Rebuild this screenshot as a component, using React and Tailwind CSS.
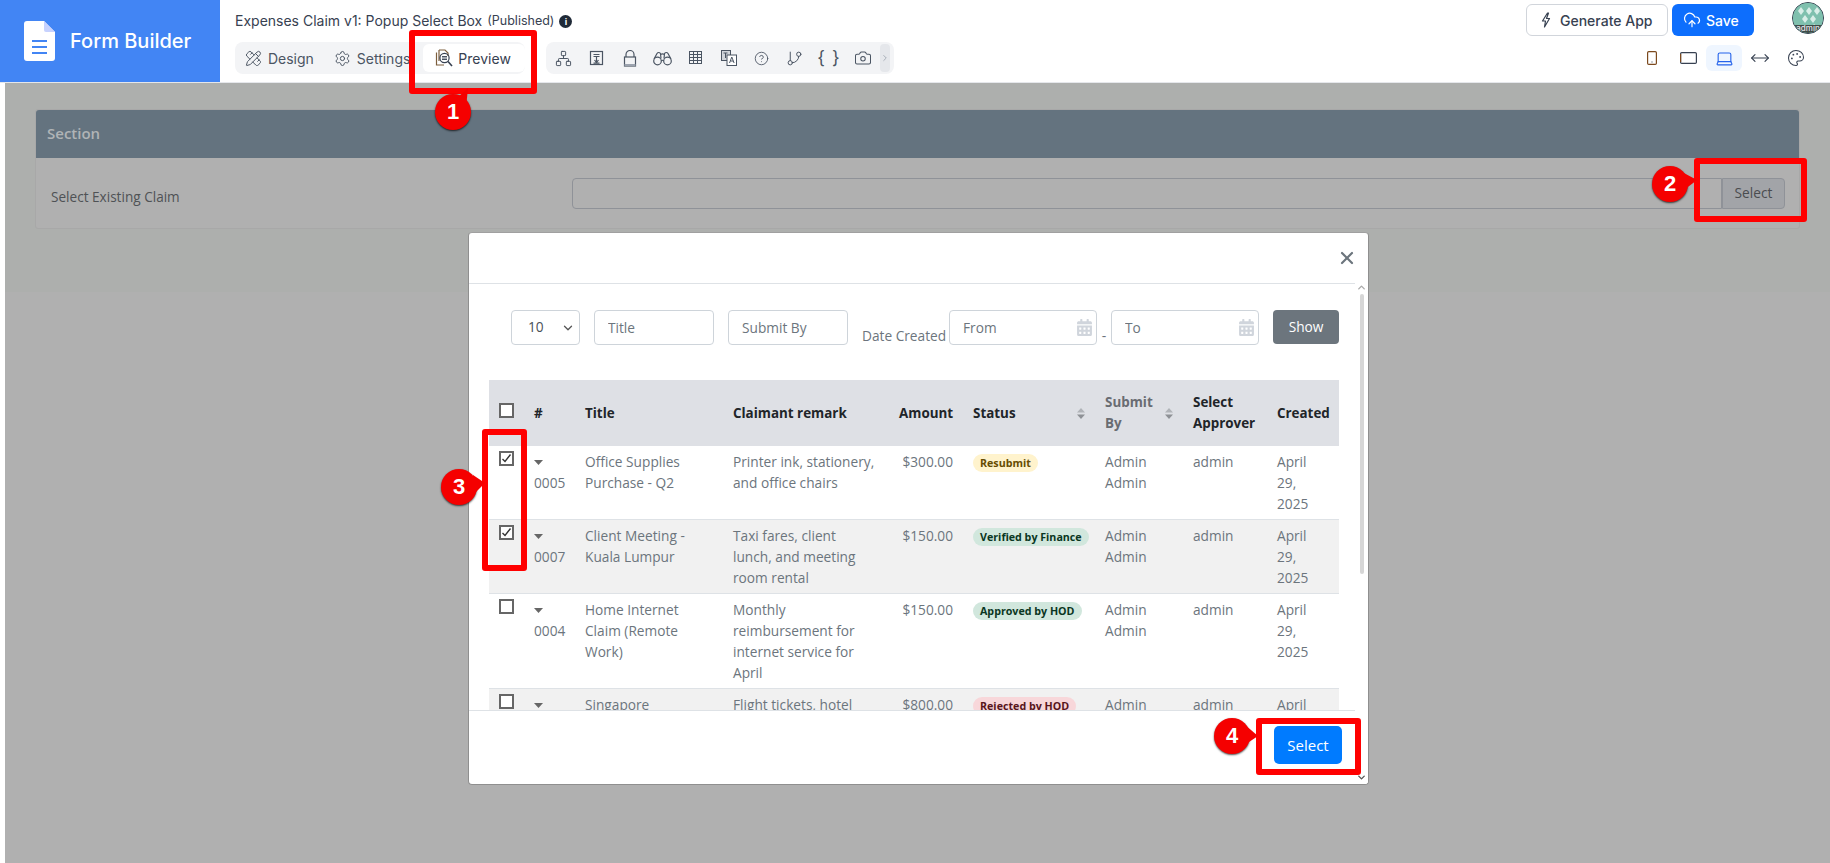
import React from "react";
import { PencilRuler, Settings, Network, CircleHelp, GitBranch, Camera, ChevronRight, ChevronDown, ChevronUp, CloudUpload, Laptop, MoveHorizontal, Palette, X } from "lucide-react";
import { FaCalendarAlt } from "react-icons/fa";

const FONT_UI = "font-['Inter',sans-serif]";

function Annot({ cls }) {
  return <div className={`absolute border-[6px] border-[#ff0000] rounded-[3px] z-30 pointer-events-none ${cls}`} />;
}

function Badge({ n, cls, tip }) {
  return (
    <div className={`absolute z-40 w-9 h-9 rounded-full bg-[#f50000] shadow-[0_1px_2px_rgba(0,0,0,0.7)] flex items-center justify-center ${cls}`}>
      <svg className="absolute left-0 top-0 overflow-visible" width="36" height="36" viewBox="0 0 36 36">
        <path d={tip} fill="#f50000" />
      </svg>
      <span className="relative font-['Liberation_Sans',sans-serif] font-bold text-[22px] leading-none text-white">{n}</span>
    </div>
  );
}

function PreviewIcon() {
  return (
    <svg width="18" height="18" viewBox="0 0 18 18" fill="none" stroke="#374151" strokeWidth="1.2">
      <path d="M4 1h6l3 3v3M4 1v11" stroke="#7c5e3c" />
      <path d="M1.5 3.5V16H9" stroke="#7c5e3c" />
      <circle cx="9.5" cy="9" r="4.6" />
      <path d="M13 12.5l4 4.5" strokeWidth="1.6" />
      <path d="M7 7.5h5M7 9h5M7 10.5h5" strokeWidth="0.9" />
    </svg>
  );
}

function ToolIcons() {
  const s = { width: 17, height: 17, strokeWidth: 1.4 };
  const wrap = "w-[33px] flex items-center justify-center shrink-0 text-[#4b5563]";
  return (
    <div className="ml-[1px] h-[32px] w-[348px] bg-[#f3f4f6] rounded-lg flex items-center pl-[1px] overflow-hidden">
      <div className={wrap}><Network {...s} /></div>
      <div className={wrap}>
        <svg width="16" height="16" viewBox="0 0 16 16" fill="none" stroke="#4b5563" strokeWidth="1.2">
          <rect x="1.5" y="1.5" width="12" height="13" />
          <path d="M4.5 4.5h6M4.5 6.5h6M7.5 6v6M5.5 10l2 2.5 2-2.5M4.5 13.2h6" />
        </svg>
      </div>
      <div className={wrap}>
        <svg width="14" height="17" viewBox="0 0 14 17" fill="none" stroke="#4b5563" strokeWidth="1.2">
          <path d="M3 7V4.5a4 4 0 0 1 8 0V7" />
          <rect x="1.5" y="7" width="11" height="9" />
          <path d="M1.5 15h11" stroke="#9ca3af" strokeWidth="2" />
        </svg>
      </div>
      <div className={wrap}>
        <svg width="19" height="15" viewBox="0 0 19 15" fill="none" stroke="#4b5563" strokeWidth="1.2">
          <circle cx="4.5" cy="10" r="3.8" />
          <circle cx="14.5" cy="10" r="3.8" />
          <path d="M8.3 10c.8-1 1.6-1 2.4 0M1 8l3-5.5c1-1.5 3-1.2 3.5.3L8 7.5M18 8l-3-5.5c-1-1.5-3-1.2-3.5.3L11 7.5M7.5 3.5c1-.6 3-.6 4 0" />
        </svg>
      </div>
      <div className={wrap}>
        <svg width="14" height="14" viewBox="0 0 14 14" fill="none" stroke="#4b5563" strokeWidth="1">
          <rect x="0.5" y="0.5" width="12" height="12" />
          <path d="M0.5 3.5h12M0.5 6.5h12M0.5 9.5h12M4.5 0.5v12M8.5 0.5v12" />
        </svg>
      </div>
      <div className={wrap}>
        <svg width="16" height="16" viewBox="0 0 16 16" fill="none" stroke="#4b5563" strokeWidth="1">
          <rect x="0.5" y="0.5" width="9" height="10" fill="#d1d5db" />
          <rect x="6" y="5" width="9.5" height="10.5" fill="#fff" />
          <path d="M8.5 13l2.3-6 2.3 6M9.5 11h2.6" />
          <path d="M2.5 3h4M4.5 3v5" />
        </svg>
      </div>
      <div className={wrap}><CircleHelp size={15} strokeWidth={1.4} /></div>
      <div className={wrap}><GitBranch {...s} /></div>
      <div className={`${wrap} ${FONT_UI} text-[18px] leading-none pl-[3px] tracking-[1px]`}>{"{ }"}</div>
      <div className={`${wrap} ml-[2px]`}><Camera width={18} height={18} strokeWidth={1.4} /></div>
      <div className="ml-[1px] w-[10px] h-[28px] bg-[#e5e7eb] rounded-sm flex items-center justify-center text-[#9ca3af]"><ChevronRight size={10} /></div>
    </div>
  );
}

function Header() {
  return (
    <header className={`h-[83px] bg-white border-b border-[#e5e7eb] flex shrink-0 ${FONT_UI}`}>
      <div className="w-[220px] bg-[#4285f4] flex items-center pl-[24px] shrink-0">
        <svg width="31" height="40" viewBox="0 0 31 40">
          <path d="M3 0h17l11 11v26a3 3 0 0 1-3 3H3a3 3 0 0 1-3-3V3a3 3 0 0 1 3-3z" fill="#fff" />
          <path d="M20 0l11 11H22a2 2 0 0 1-2-2z" fill="#c7d2fe" />
          <path d="M8 20h15M8 26h15M8 32h15" stroke="#4285f4" strokeWidth="2.2" />
        </svg>
        <span className="ml-[15px] text-white text-[20px] font-medium leading-none">Form Builder</span>
      </div>
      <div className="flex-1 pl-[15px] pt-[12px]">
        <div className="flex items-center h-[18px] text-[#374151] text-[14px] leading-none">
          <span>Expenses Claim v1: Popup Select Box</span>
          <span className="ml-[5px] text-[12.5px]">(Published)</span>
          <span className="ml-[5px] w-[13px] h-[13px] rounded-full bg-[#1f2937] text-white flex items-center justify-center text-[9px] font-bold">i</span>
        </div>
        <div className="flex mt-[12px] gap-[20px]">
          <div className="h-[32px] w-[290px] bg-[#f3f4f6] rounded-lg flex items-center pl-[10px] text-[14px] text-[#4b5563]">
            <PencilRuler size={17} strokeWidth={1.4} />
            <span className="ml-[6px]">Design</span>
            <Settings size={17} strokeWidth={1.4} className="ml-[20px]" />
            <span className="ml-[6px]">Settings</span>
            <div className="ml-[13px] h-[28px] w-[102px] bg-white rounded-md flex items-center pl-[12px] text-[#374151]">
              <PreviewIcon />
              <span className="ml-[5px]">Preview</span>
            </div>
          </div>
          <ToolIcons />
        </div>
      </div>
      <div className="w-[304px] shrink-0 relative text-[14px] pt-[4px]">
        <div className="flex">
          <button className="h-[32px] w-[142px] border border-[#d1d5db] rounded-md bg-white text-[#374151] font-medium flex items-center pl-[14px]">
            <svg width="10" height="16" viewBox="0 0 10 16" fill="none" stroke="#374151" strokeWidth="1.2" strokeLinejoin="round">
              <path d="M6.5 1L1.5 9h3L3.5 15l5-8.5h-3L7.5 1z" />
            </svg>
            <span className="ml-[9px]">Generate App</span>
          </button>
          <button className="ml-[4px] h-[32px] w-[82px] bg-[#0d6efd] rounded-md text-white font-medium flex items-center pl-[11px]">
            <CloudUpload size={18} strokeWidth={1.6} />
            <span className="ml-[5px]">Save</span>
          </button>
          <div className="ml-[38px] w-[32px] h-[32px] -mt-[2px] rounded-full overflow-hidden shrink-0 border border-[#374151] relative bg-[#7fbfae]">
            <svg width="32" height="32" viewBox="0 0 32 32" className="absolute inset-0">
              <rect width="32" height="32" fill="#7fc0ae" />
              <path d="M8 4l3 4-3 4-3-4zM16 4l3 4-3 4-3-4zM24 4l3 4-3 4-3-4zM12 12l3 4-3 4-3-4zM20 12l3 4-3 4-3-4z" fill="#d9eee8" />
              <rect y="22" width="32" height="10" fill="#3f4a47" />
            </svg>
            <span className="absolute left-0 right-0 top-[21px] text-center text-[8px] leading-[9px] font-medium text-[#e5e7eb]">admin</span>
          </div>
        </div>
        <div className="absolute top-[45px] left-0 w-full h-[26px]">
          <svg className="absolute left-[121px] top-[6px]" width="10" height="14" viewBox="0 0 10 14" fill="none" stroke="#374151" strokeWidth="1.2">
            <rect x="0.6" y="0.6" width="8.8" height="12.8" rx="1.2" stroke="#7c4a1e" />
            <path d="M4.5 11h1" />
          </svg>
          <svg className="absolute left-[154px] top-[7px]" width="17" height="12" viewBox="0 0 17 12" fill="none" stroke="#374151" strokeWidth="1.2">
            <rect x="0.6" y="0.6" width="15.8" height="10.8" rx="1.2" />
            <path d="M0.6 2v8" stroke="#7c4a1e" />
          </svg>
          <div className="absolute left-[180px] top-0 w-[36px] h-[26px] bg-[#eff6ff] rounded-md flex items-center justify-center text-[#2563eb]"><Laptop size={19} strokeWidth={1.4} /></div>
          <div className="absolute left-[224px] top-[3px] text-[#374151]"><MoveHorizontal size={20} strokeWidth={1.3} /></div>
          <div className="absolute left-[261px] top-[4px] text-[#374151]"><Palette size={18} strokeWidth={1.4} /></div>
        </div>
      </div>
    </header>
  );
}

function Check({ on }) {
  return (
    <span className="inline-flex w-[15px] h-[15px] border-2 border-[#666] bg-white items-center justify-center align-top">
      {on && (
        <svg width="11" height="11" viewBox="0 0 11 11" fill="none" stroke="#333" strokeWidth="1.4">
          <path d="M1.5 6l2.5 2.5 5.5-7" />
        </svg>
      )}
    </span>
  );
}

function Sort() {
  return (
    <svg width="8" height="11" viewBox="0 0 8 11" className="shrink-0">
      <path d="M0 4.5L4 0l4 4.5z" fill="#b0b3b8" />
      <path d="M0 6.5L4 11l4-4.5z" fill="#8e9196" />
    </svg>
  );
}

const tones = {
  yellow: "bg-[#fff3cd] text-[#664d03]",
  green: "bg-[#d1e7dd] text-[#0a3622]",
  red: "bg-[#f8d7da] text-[#58151c]",
};

const rows = [
  { id: "0005", on: true, title: "Office Supplies Purchase - Q2", remark: ["Printer ink, stationery,", "and office chairs"], amt: "$300.00", st: "Resubmit", tone: "yellow", by: "Admin Admin", date: "April 29, 2025" },
  { id: "0007", on: true, title: "Client Meeting - Kuala Lumpur", remark: ["Taxi fares, client", "lunch, and meeting", "room rental"], amt: "$150.00", st: "Verified by Finance", tone: "green", by: "Admin Admin", date: "April 29, 2025" },
  { id: "0004", on: false, title: "Home Internet Claim (Remote Work)", remark: ["Monthly", "reimbursement for", "internet service for", "April"], amt: "$150.00", st: "Approved by HOD", tone: "green", by: "Admin Admin", date: "April 29, 2025" },
  { id: "", on: false, title: "Singapore", remark: ["Flight tickets, hotel"], amt: "$800.00", st: "Rejected by HOD", tone: "red", by: "Admin", date: "April" },
];

function Table() {
  const th = "px-[10px] py-[5px] text-left font-bold align-middle text-[13.4px]";
  const td = "px-[10px] py-[5px] align-top";
  return (
    <table className="ml-[20px] mt-[35px] w-[850px] table-fixed border-collapse text-[13.7px] leading-[21px] text-[#6c757d]">
      <colgroup>
        <col className="w-[35px]" />
        <col className="w-[51px]" />
        <col className="w-[148px]" />
        <col className="w-[166px]" />
        <col className="w-[74px]" />
        <col className="w-[132px]" />
        <col className="w-[88px]" />
        <col className="w-[84px]" />
        <col className="w-[72px]" />
      </colgroup>
      <thead>
        <tr className="h-[66px] bg-[#dee0e5] text-[#212529]">
          <th className={th}><Check /></th>
          <th className={th}>#</th>
          <th className={th}>Title</th>
          <th className={th}>Claimant remark</th>
          <th className={`${th} !text-right`}>Amount</th>
          <th className={th}><div className="flex items-center justify-between"><span>Status</span><Sort /></div></th>
          <th className={`${th} text-[#696c72]`}><div className="flex items-center justify-between"><span>Submit<br />By</span><Sort /></div></th>
          <th className={th}>Select Approver</th>
          <th className={th}>Created</th>
        </tr>
      </thead>
      <tbody>
        {rows.map((r, i) => (
          <tr key={r.st + i} className={`border-b border-[#dee2e6] ${i % 2 ? "bg-[#f1f1f1]" : "bg-white"}`}>
            <td className={td}><Check on={r.on} /></td>
            <td className={td}>
              <div className="h-[21px] pt-[9px]">
                <svg width="9" height="5" viewBox="0 0 9 5" className="block"><path d="M0 0h9L4.5 5z" fill="#666" /></svg>
              </div>
              {r.id}
            </td>
            <td className={td}>{r.title}</td>
            <td className={td}>{r.remark.map((l) => <div key={l} className="whitespace-nowrap">{l}</div>)}</td>
            <td className={`${td} text-right`}>{r.amt}</td>
            <td className={td}>
              <span className={`inline-block rounded-full px-[7px] h-[18px] mt-[3px] align-top text-[10.7px] leading-[18px] font-bold whitespace-nowrap ${tones[r.tone]}`}>{r.st}</span>
            </td>
            <td className={td}>{r.by}</td>
            <td className={td}>admin</td>
            <td className={td}>{r.date}</td>
          </tr>
        ))}
      </tbody>
    </table>
  );
}

function Modal() {
  const input = "h-[35px] border border-[#ced4da] rounded-[4px] bg-white text-[13.7px] text-[#495057] placeholder:text-[#6c757d] pl-[13px] outline-none";
  return (
    <div className="absolute left-[468px] top-[232px] w-[901px] h-[553px] bg-white rounded-[4px] border border-[#8f8f8f] border-t-[#a0a0a0] flex flex-col overflow-hidden z-10">
      <div className="w-[890px] h-[51px] border-b border-[#dee2e6] flex items-center justify-end pr-[2px] shrink-0">
        <X size={20} strokeWidth={2.6} className="text-[#6c757d]" />
      </div>
      <div className="w-[890px] flex-1 overflow-hidden">
        <div className="pt-[26px]">
          <div className="flex items-start h-[35px] pl-[42px]">
            <div className="w-[69px] h-[35px] border border-[#ced4da] rounded-[4px] pl-[16px] flex items-center justify-between pr-[4px] text-[13.7px] text-[#495057]">
              <span>10</span><ChevronDown size={14} strokeWidth={2.2} className="text-[#555]" />
            </div>
            <input className={`${input} ml-[14px] w-[120px]`} placeholder="Title" />
            <input className={`${input} ml-[14px] w-[120px]`} placeholder="Submit By" />
            <span className="ml-[14px] mt-[15px] text-[13.7px] leading-[21px] text-[#6c757d] w-[87px] whitespace-nowrap">Date Created</span>
            <div className="relative">
              <input className={`${input} w-[148px]`} placeholder="From" />
              <FaCalendarAlt className="absolute right-[5px] top-[9px] w-[15px] h-[17px] text-[#d0d5dc]" />
            </div>
            <span className="w-[14px] text-center mt-[15px] text-[14px] leading-[21px] text-[#6c757d]">-</span>
            <div className="relative">
              <input className={`${input} w-[148px]`} placeholder="To" />
              <FaCalendarAlt className="absolute right-[5px] top-[9px] w-[15px] h-[17px] text-[#d0d5dc]" />
            </div>
            <button className="ml-[14px] w-[66px] h-[34px] rounded-[4px] bg-[#6c757d] text-white text-[13.7px]">Show</button>
          </div>
          <Table />
        </div>
      </div>
      <div className="w-[890px] h-[74px] border-t border-[#dee2e6] flex justify-end items-start pt-[15px] pr-[17px] shrink-0">
        <button className="w-[68px] h-[38px] rounded-[5px] bg-[#007bff] text-white text-[15px]">Select</button>
      </div>
      <div className="absolute right-0 top-[49px] bottom-0 w-[13px] bg-white flex flex-col items-center text-[#666]">
        <ChevronUp size={11} strokeWidth={3} className="text-[#aaa]" />
        <div className="mt-[1px] w-[4px] h-[280px] bg-[#d6d6d6] rounded-full" />
        <ChevronDown size={11} strokeWidth={3} className="mt-auto mb-[1px] text-[#555]" />
      </div>
    </div>
  );
}

export default function App() {
  return (
    <div className="relative w-[1830px] h-[863px] overflow-hidden bg-white font-['Open_Sans',sans-serif]">
      <Header />
      <main className="ml-[5px] h-[780px] bg-[#b0b0b0] flex flex-col">
        <div className="h-[209px] bg-[#adafad] pt-[26px] pl-[30px] shrink-0">
          <section className="w-[1765px] h-[120px] bg-[#b0b0b0] border border-[#a8a8a8] rounded-[3px]">
            <div className="h-[48px] bg-[#64737f] flex items-center pl-[11px] pb-[2px] text-[15px] font-semibold text-[#b0b4b6] rounded-t-[3px]">Section</div>
            <div className="h-[70px] flex items-center pl-[15px]">
              <span className="w-[521px] pt-[9px] text-[13.6px] text-[#4f5255]">Select Existing Claim</span>
              <div className="w-[1150px] h-[31px] border border-[#8f9298] rounded-l-[4px] bg-[#b0b0b0]" />
              <div className="w-[63px] h-[31px] border border-[#8f9298] rounded-r-[4px] bg-[#a2a4a8] flex items-center justify-center text-[13.7px] text-[#4a4c4f]">Select</div>
            </div>
          </section>
        </div>
      </main>
      <Modal />

      <Annot cls="left-[409px] top-[30px] w-[128px] h-[64px]" />
      <Badge n="1" cls="left-[435px] top-[94px]" tip="M22 4L33 -6L31 14z" />
      <Annot cls="left-[1694px] top-[158px] w-[113px] h-[64px]" />
      <Badge n="2" cls="left-[1652px] top-[166px]" tip="M30 6L45 14L32 24z" />
      <Annot cls="left-[482px] top-[429px] w-[45px] h-[142px]" />
      <Badge n="3" cls="left-[441px] top-[469px]" tip="M32 6L44 14L32 26z" />
      <Annot cls="left-[1256px] top-[718px] w-[105px] h-[57px]" />
      <Badge n="4" cls="left-[1214px] top-[718px]" tip="M30 6L44 18L32 26z" />
    </div>
  );
}
